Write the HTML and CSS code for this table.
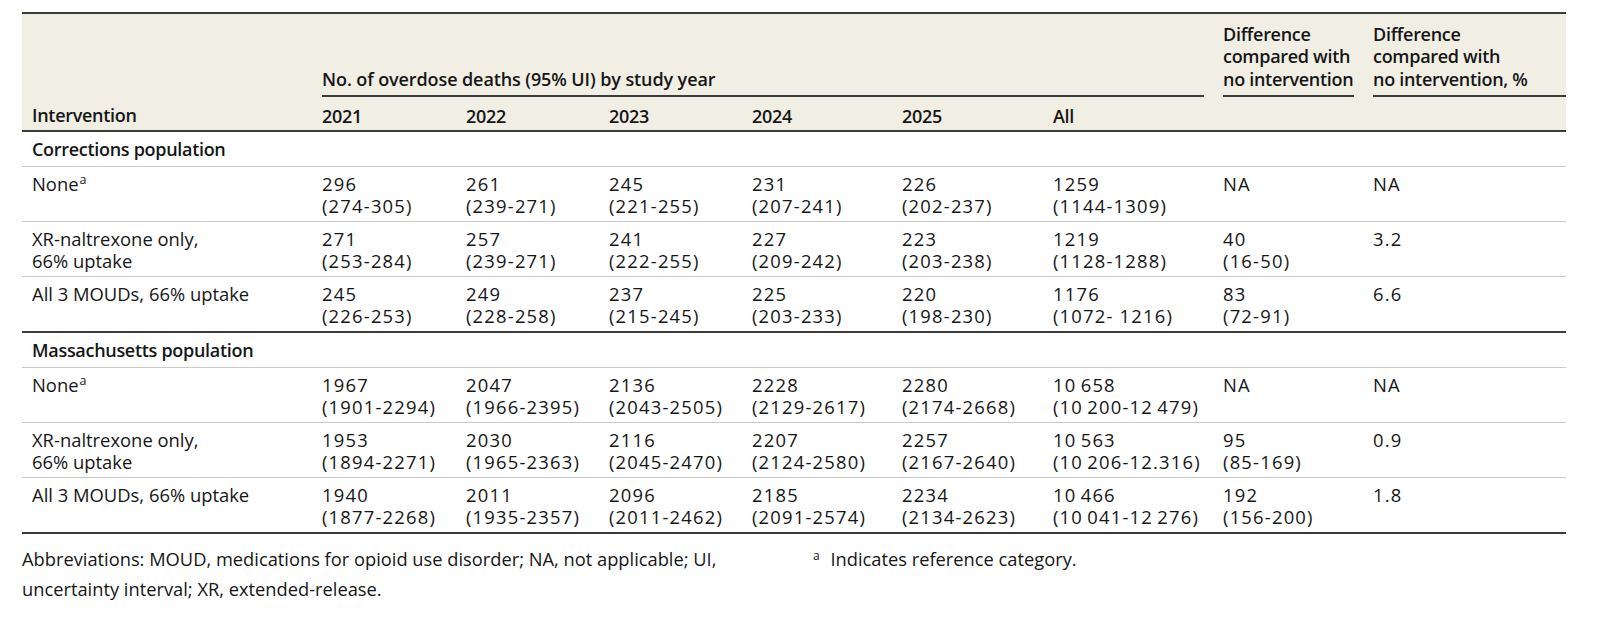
FILE: index.html
```html
<!DOCTYPE html>
<html lang="en">
<head>
<meta charset="utf-8">
<title>Overdose deaths by intervention</title>
<link rel="stylesheet" href="styles.css">
</head>
<body>
<div class="page">
  <table class="data">
    <colgroup>
      <col class="w-int">
      <col class="w-y1">
      <col class="w-y2">
      <col class="w-y3">
      <col class="w-y4">
      <col class="w-y5">
      <col class="w-all">
      <col class="w-diff">
      <col class="w-pct">
    </colgroup>
    <thead>
      <tr class="h1">
        <th rowspan="2" class="c-int">Intervention</th>
        <th colspan="6" class="grp"><div class="ul">No. of overdose deaths (95% UI) by study year</div></th>
        <th class="grp"><div class="ul">Difference<br>compared with<br>no intervention</div></th>
        <th class="grp last"><div class="ul">Difference<br>compared with<br>no intervention, %</div></th>
      </tr>
      <tr class="h2">
        <th>2021</th>
        <th>2022</th>
        <th>2023</th>
        <th>2024</th>
        <th>2025</th>
        <th>All</th>
        <th></th>
        <th></th>
      </tr>
    </thead>
    <tbody>
      <tr class="sec"><td colspan="9" class="c-int">Corrections population</td></tr>
      <tr>
        <td class="c-int">None<sup>a</sup></td>
        <td class="num">296<br>(274-305)</td>
        <td class="num">261<br>(239-271)</td>
        <td class="num">245<br>(221-255)</td>
        <td class="num">231<br>(207-241)</td>
        <td class="num">226<br>(202-237)</td>
        <td class="num">1259<br>(1144-1309)</td>
        <td class="num">NA</td>
        <td class="num">NA</td>
      </tr>
      <tr>
        <td class="c-int">XR-naltrexone only,<br>66% uptake</td>
        <td class="num">271<br>(253-284)</td>
        <td class="num">257<br>(239-271)</td>
        <td class="num">241<br>(222-255)</td>
        <td class="num">227<br>(209-242)</td>
        <td class="num">223<br>(203-238)</td>
        <td class="num">1219<br>(1128-1288)</td>
        <td class="num">40<br>(16-50)</td>
        <td class="num">3.2</td>
      </tr>
      <tr class="endgrp">
        <td class="c-int">All 3 MOUDs, 66% uptake</td>
        <td class="num">245<br>(226-253)</td>
        <td class="num">249<br>(228-258)</td>
        <td class="num">237<br>(215-245)</td>
        <td class="num">225<br>(203-233)</td>
        <td class="num">220<br>(198-230)</td>
        <td class="num">1176<br>(1072- 1216)</td>
        <td class="num">83<br>(72-91)</td>
        <td class="num">6.6</td>
      </tr>
      <tr class="sec"><td colspan="9" class="c-int">Massachusetts population</td></tr>
      <tr>
        <td class="c-int">None<sup>a</sup></td>
        <td class="num">1967<br>(1901-2294)</td>
        <td class="num">2047<br>(1966-2395)</td>
        <td class="num">2136<br>(2043-2505)</td>
        <td class="num">2228<br>(2129-2617)</td>
        <td class="num">2280<br>(2174-2668)</td>
        <td class="num">10&#8201;658<br>(10&#8201;200-12&#8201;479)</td>
        <td class="num">NA</td>
        <td class="num">NA</td>
      </tr>
      <tr>
        <td class="c-int">XR-naltrexone only,<br>66% uptake</td>
        <td class="num">1953<br>(1894-2271)</td>
        <td class="num">2030<br>(1965-2363)</td>
        <td class="num">2116<br>(2045-2470)</td>
        <td class="num">2207<br>(2124-2580)</td>
        <td class="num">2257<br>(2167-2640)</td>
        <td class="num">10&#8201;563<br>(10&#8201;206-12.316)</td>
        <td class="num">95<br>(85-169)</td>
        <td class="num">0.9</td>
      </tr>
      <tr class="endgrp">
        <td class="c-int">All 3 MOUDs, 66% uptake</td>
        <td class="num">1940<br>(1877-2268)</td>
        <td class="num">2011<br>(1935-2357)</td>
        <td class="num">2096<br>(2011-2462)</td>
        <td class="num">2185<br>(2091-2574)</td>
        <td class="num">2234<br>(2134-2623)</td>
        <td class="num">10&#8201;466<br>(10&#8201;041-12&#8201;276)</td>
        <td class="num">192<br>(156-200)</td>
        <td class="num">1.8</td>
      </tr>
    </tbody>
  </table>
  <div class="notes">
    <p class="note">Abbreviations: MOUD, medications for opioid use disorder; NA, not applicable; UI, uncertainty interval; XR, extended-release.</p>
    <p class="note"><sup>a</sup> Indicates reference category.</p>
  </div>
</div>
</body>
</html>
```

FILE: styles.css
```css
html, body {
  margin: 0;
  padding: 0;
  background: #ffffff;
}

body {
  font-family: "Open Sans", "Liberation Sans", sans-serif;
  color: #161616;
}

.page {
  padding: 12px 31px 0 22px;
}

.data {
  width: 1544px;
  border-collapse: collapse;
  table-layout: fixed;
  font-size: 18px;
  line-height: 22px;
}

.w-int { width: 300px; }
.w-y1 { width: 144px; }
.w-y2 { width: 143px; }
.w-y3 { width: 143px; }
.w-y4 { width: 150px; }
.w-y5 { width: 151px; }
.w-all { width: 170px; }
.w-diff { width: 150px; }
.w-pct { width: 193px; }

thead {
  background: #f1eee4;
  border-top: 2px solid #3c3c3c;
  border-bottom: 2px solid #3c3c3c;
}

th {
  font-weight: 600;
  text-align: left;
  padding: 0;
  letter-spacing: -0.3px;
}

.h1 th.grp {
  vertical-align: bottom;
  padding: 9px 19px 0 0;
  line-height: 22.4px;
}

.h1 th.grp.last {
  padding-right: 0;
}

.grp .ul {
  border-bottom: 2px solid #3c3c3c;
  padding-bottom: 5px;
}

th[colspan] .ul {
  letter-spacing: -0.1px;
}

.c-int {
  padding-left: 10px;
}

th.c-int {
  vertical-align: bottom;
  padding-bottom: 4px;
}

.h2 th {
  padding: 8px 0 3px 0;
}

td {
  padding: 6px 0 4px 0;
  vertical-align: top;
  font-weight: 400;
  font-size: 18.4px;
}

tbody tr {
  border-bottom: 1px solid #c9c9c9;
}

tbody tr.endgrp {
  border-bottom: 2px solid #3c3c3c;
}

tr.sec td {
  font-weight: 600;
  font-size: 18px;
  padding: 6px 0 6px 10px;
  letter-spacing: -0.3px;
}

.num {
  letter-spacing: 1.2px;
}

sup {
  font-size: 12.5px;
  line-height: 0;
  vertical-align: 7px;
  margin-left: 1px;
}

.notes {
  display: flex;
  gap: 80px;
  padding-top: 10px;
  font-size: 18.3px;
  line-height: 30px;
}

.note {
  margin: 0;
}

.note:first-child {
  width: 710px;
}

.note sup {
  font-size: 12px;
  vertical-align: 6px;
  margin-right: 6px;
}
```
